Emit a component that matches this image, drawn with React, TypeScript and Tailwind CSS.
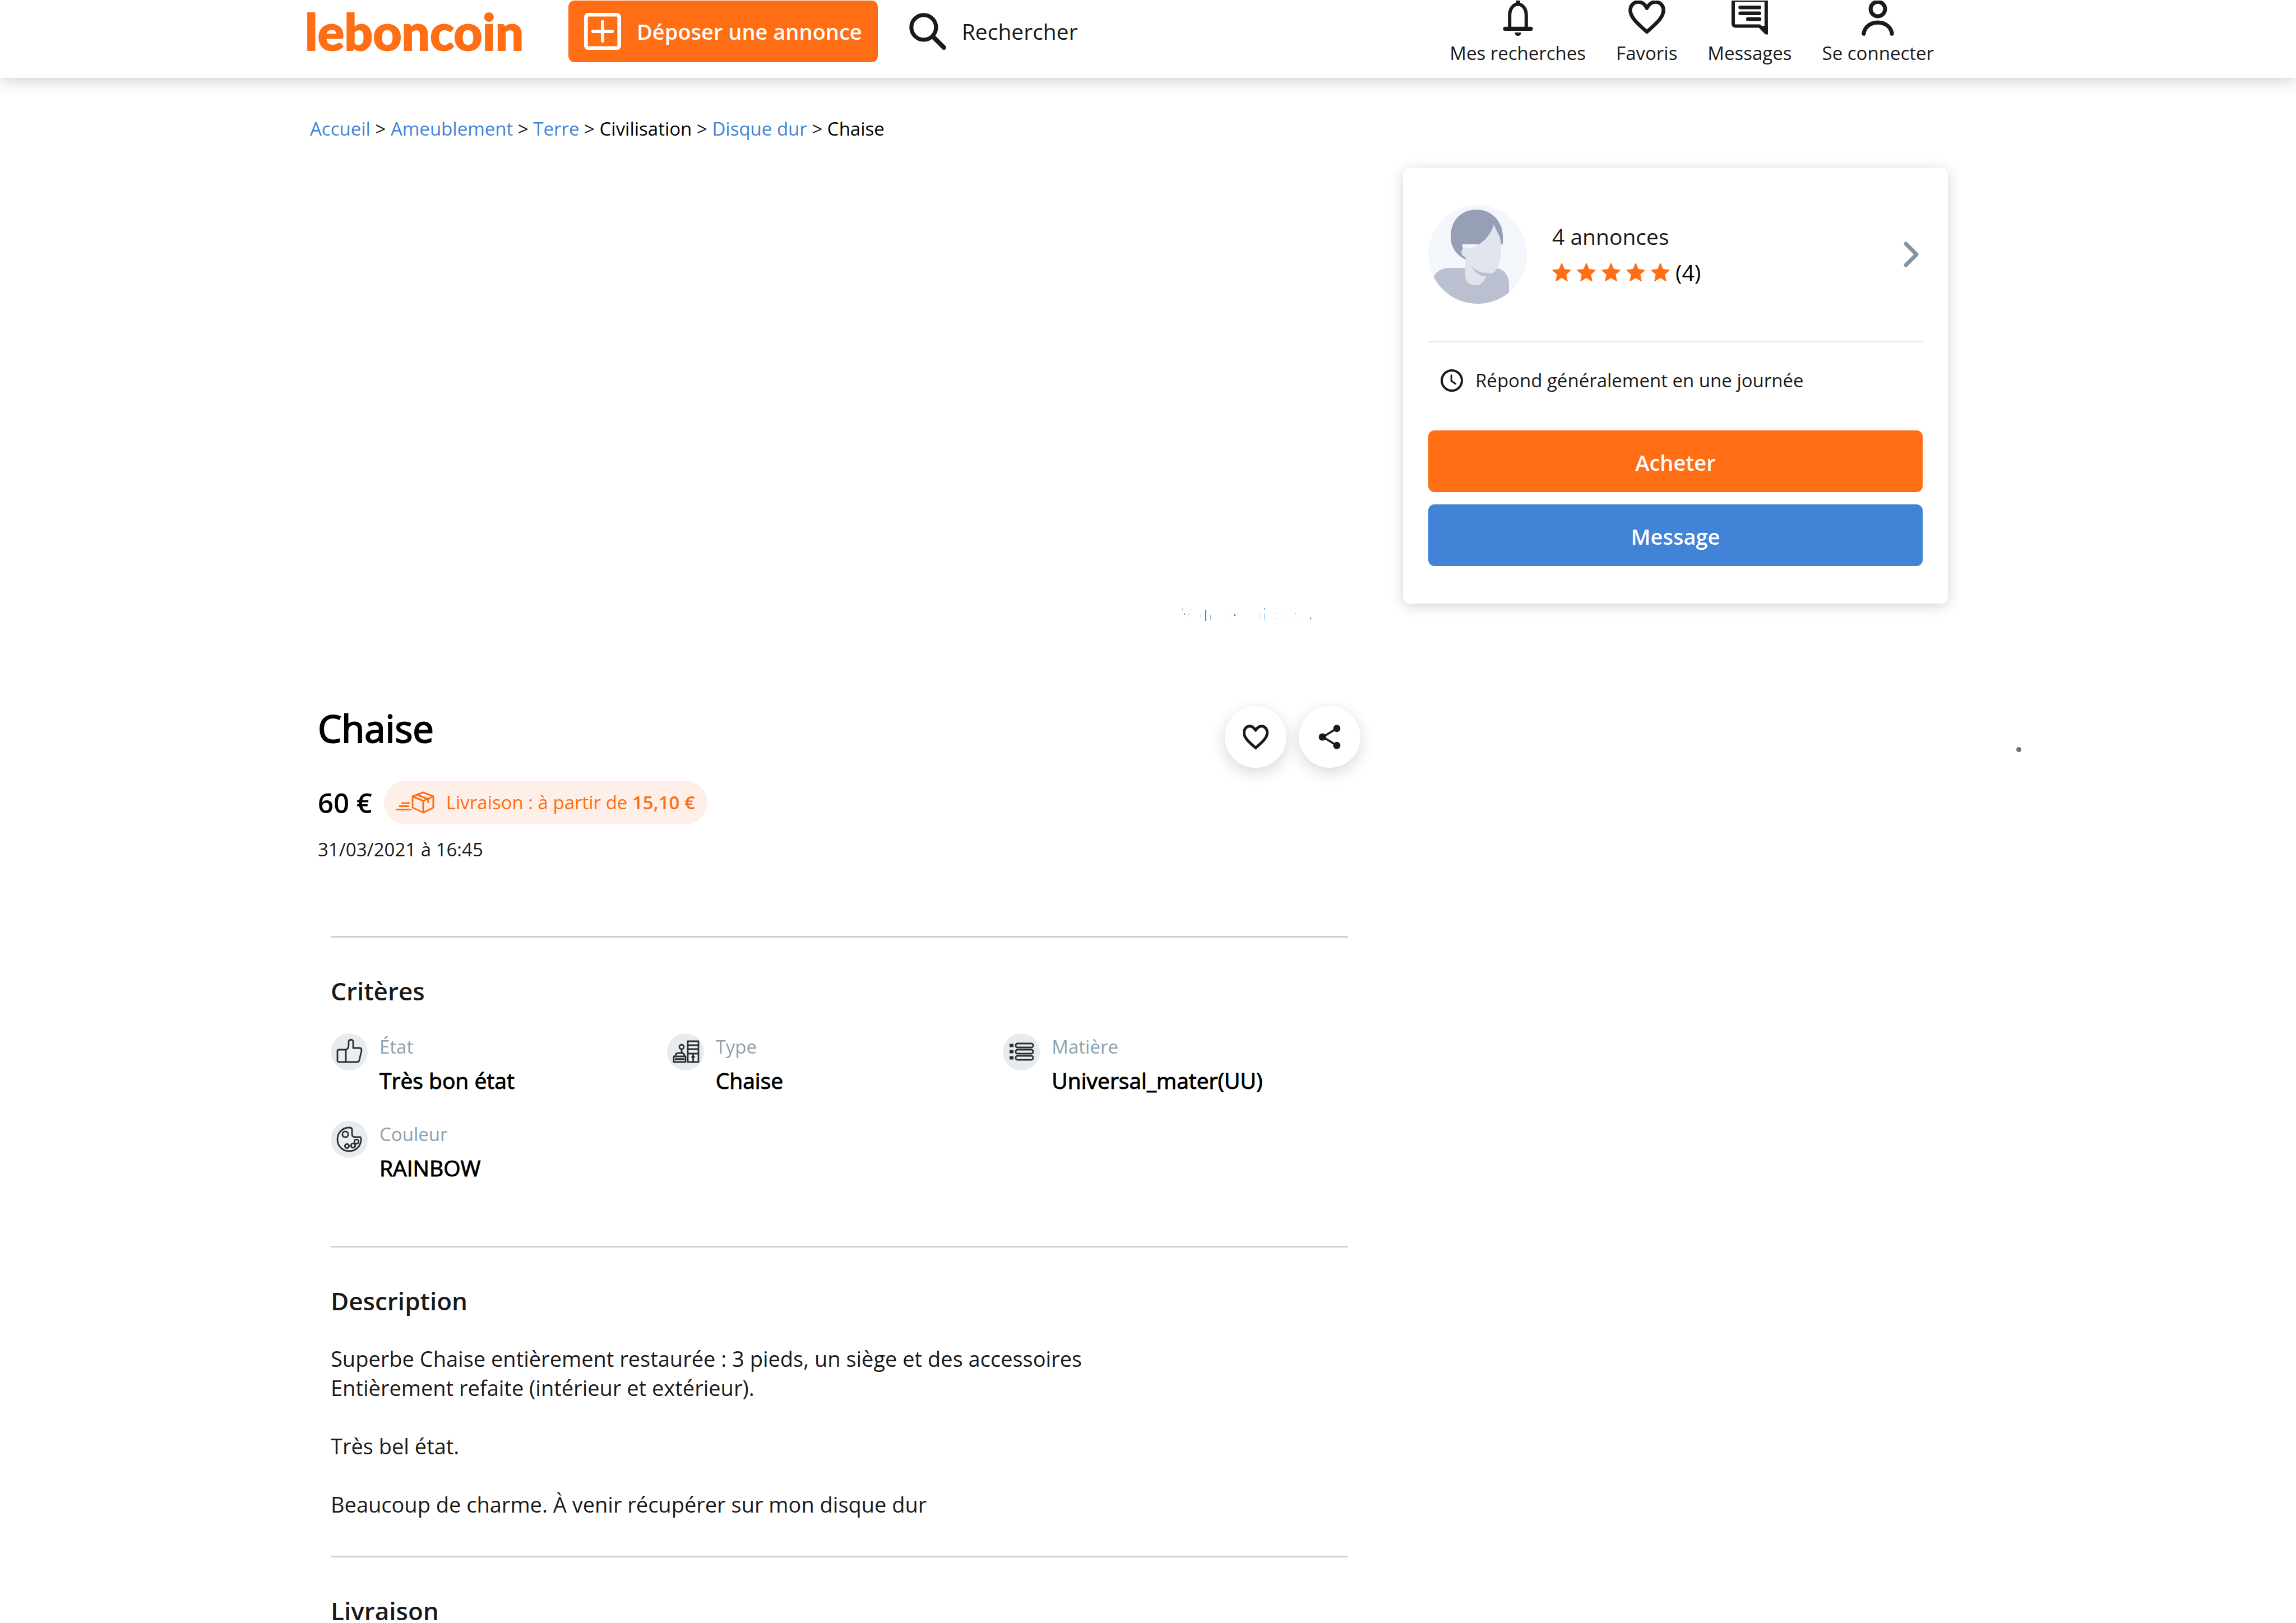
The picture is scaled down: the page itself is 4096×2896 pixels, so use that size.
import React from "react";

type IconProps = { className?: string };

function BellIcon({ className }: IconProps) {
  return (
    <svg viewBox="0 1 24 23" className={className} fill="none" stroke="currentColor" strokeWidth="2.200" aria-hidden="true">
      <path d="M6.600 19V10.600C6.600 6.600 8.800 3.400 12 3.400s5.400 3.200 5.400 7.200V19" />
      <path d="M3.600 19.400h16.800" strokeWidth="2.600" strokeLinecap="round" />
      <path d="M12 0v4" strokeWidth="2.800" />
      <path d="M10 21.800h4c0 1.400-.8 2.200-2 2.200s-2-.8-2-2.200z" fill="currentColor" stroke="none" />
    </svg>
  );
}

function HeartIcon({ className }: IconProps) {
  return (
    <svg viewBox="0 1 24 23" className={className} fill="none" stroke="currentColor" strokeWidth="2.400" strokeLinejoin="round" aria-hidden="true">
      <path d="M12 21.400C7 16.800 1.200 12.400 1.200 7.200c0-3 2.300-5.300 5.100-5.300 2.400 0 4.500 1.600 5.700 4.100 1.200-2.500 3.300-4.100 5.700-4.100 2.800 0 5.100 2.300 5.100 5.300 0 5.200-5.800 9.600-10.800 14.200z" />
    </svg>
  );
}

function ChatIcon({ className }: IconProps) {
  return (
    <svg viewBox="0 1 24 23" className={className} aria-hidden="true">
      <path d="M22.900 -1v23L18.500 17.600H2.800a1.400 1.400 0 0 1-1.400-1.400V-1" fill="none" stroke="currentColor" strokeWidth="2.200" strokeLinejoin="round" />
      <path d="M1 1.200h23" stroke="currentColor" strokeWidth="1.400" />
      <path d="M20 17.500h4v6z" fill="currentColor" />
      <path d="M6 5.500h12.500M6 9.300h12.500M11 13.100h7.500" stroke="currentColor" strokeWidth="2.400" strokeLinecap="round" />
    </svg>
  );
}

function UserIcon({ className }: IconProps) {
  return (
    <svg viewBox="0 1 24 23" className={className} fill="none" stroke="currentColor" strokeWidth="2.600" strokeLinecap="round" aria-hidden="true">
      <circle cx="12" cy="6.500" r="4.700" />
      <path d="M2.800 22.600c.6-4.500 4.500-7.300 9.200-7.300s8.600 2.800 9.200 7.300" />
    </svg>
  );
}

function PlusSquareIcon({ className }: IconProps) {
  return (
    <svg viewBox="0 0 24 24" className={className} fill="none" stroke="currentColor" aria-hidden="true">
      <rect x="1.200" y="1.200" width="21.600" height="21.600" rx="1.600" strokeWidth="2.400" />
      <path d="M12 5.800v12.400M5.800 12h12.400" strokeWidth="2.200" strokeLinecap="round" />
    </svg>
  );
}

function SearchIcon({ className }: IconProps) {
  return (
    <svg viewBox="0 0 24 24" className={className} fill="none" stroke="currentColor" aria-hidden="true">
      <circle cx="9.400" cy="9.400" r="8" strokeWidth="2.600" />
      <path d="M15.500 15.500l7 7" strokeWidth="3" strokeLinecap="round" />
    </svg>
  );
}

function Avatar({ className }: IconProps) {
  return (
    <svg viewBox="0 0 176 176" className={className} role="img" aria-label="Photo du vendeur">
      <defs>
        <clipPath id="avatar-disc">
          <circle cx="88" cy="88" r="88" />
        </clipPath>
      </defs>
      <g clipPath="url(#avatar-disc)">
        <rect width="176" height="176" fill="#f3f6fa" />
        <path d="M8 176V132c4-14 16-20 32-20h76c18 0 28 12 28 30v34z" fill="#bac0cf" />
        <path d="M66 92v36c0 9 8 15 18 15s18-7 20-20z" fill="#e1e4ec" />
        <path d="M40 56C40 28 58 8 86 8c26 0 47 20 47 48v14H60l8 28C48 88 40 74 40 56z" fill="#979fb7" />
        <path d="M74 78c22-8 36-22 43-43 6 14 13 22 13 38 0 22-4 36-10 44-4 6-12 6-20 4-14-3-28-10-34-26z" fill="#e1e4ec" />
        <circle cx="68" cy="84" r="9" fill="#e1e4ec" />
        <path d="M76 106c8 12 20 16 32 15-2 4-6 6-10 6-8-1-18-10-22-21z" fill="#bac0cf" />
      </g>
    </svg>
  );
}

function Star() {
  return (
    <svg viewBox="0 0 24 24" className="h-[34px] w-[34px]" aria-hidden="true">
      <path
        d="M12 .8l3.300 7.500 8 .8-6 5.500 1.800 8.200L12 18.500l-7.100 4.300 1.800-8.200-6-5.500 8-.8z"
        fill="#ff6e14"
        stroke="#ff6e14"
        strokeLinejoin="round"
      />
    </svg>
  );
}

function ClockIcon({ className }: IconProps) {
  return (
    <svg viewBox="0 0 24 24" className={className} fill="none" stroke="currentColor" strokeWidth="2.400" strokeLinecap="round" aria-hidden="true">
      <circle cx="12" cy="12" r="10.800" />
      <path d="M11.500 6.500v6l4.500 3" strokeWidth="1.800" />
    </svg>
  );
}

function DeliveryIcon({ className }: IconProps) {
  return (
    <svg viewBox="0 0 68 40" className={className} fill="none" stroke="currentColor" strokeWidth="3" strokeLinejoin="round" aria-hidden="true">
      <path d="M48 2l18 7v20L48 38 29 29V9z" />
      <path d="M29 9l19 8 18-8M48 17v21" />
      <path d="M37 6l20 8v7" />
      <path d="M9 21h15M5 26.500h18M0 32.500h27" />
    </svg>
  );
}

function ThumbIcon() {
  return (
    <svg viewBox="0 0 66 66" className="h-[66px] w-[66px]" fill="#e9eef2" stroke="#2b2f33" strokeWidth="2.800" strokeLinejoin="round" aria-hidden="true">
      <path d="M14 29h13v22H14c-1 0-2-1-2-2V31c0-1 1-2 2-2z" />
      <path d="M27 29c4-1 5-4 5-9v-5c0-5 8-5 8 0v11h11c3 0 4 2 4 4l-4 18c-1 2-2 3-4 3H27z" />
    </svg>
  );
}

function FurnitureIcon() {
  return (
    <svg viewBox="0 0 66 66" className="h-[66px] w-[66px]" fill="#eef1f4" stroke="#2b2f33" strokeWidth="2.800" strokeLinejoin="round" aria-hidden="true">
      <path d="M37 14h19v37H37z" />
      <path d="M37 21h19M37 28h19M37 36h19M46.500 36v15" />
      <path d="M43.500 42h6" strokeWidth="4" />
      <path d="M26 35v-6" />
      <circle cx="26" cy="24" r="4" />
      <path d="M15 41c0-4 2-6 5-6h6c3 0 5 2 5 6" />
      <path d="M12 41h21v10H12z" />
      <path d="M14 46h17" strokeWidth="3.600" />
    </svg>
  );
}

function ListIcon() {
  return (
    <svg viewBox="0 0 66 66" className="h-[66px] w-[66px]" stroke="#2b2f33" aria-hidden="true">
      <path d="M12 21.500h7M12 32.500h7M12 43.500h7" strokeWidth="6" />
      <g fill="#eef1f4" strokeWidth="2.800">
        <rect x="23" y="18" width="31" height="7" rx="3" />
        <rect x="23" y="29" width="31" height="7" rx="3" />
        <rect x="23" y="40" width="31" height="7" rx="3" />
      </g>
    </svg>
  );
}

function PaletteIcon() {
  return (
    <svg viewBox="0 0 66 66" className="h-[66px] w-[66px]" fill="#e9eef2" stroke="#2b2f33" strokeWidth="2.800" strokeLinejoin="round" aria-hidden="true">
      <path d="M33 12C21 12 12 21 12 33s9 21 21 21 21-9 21-21c0-2 0-4-2-4h-8c-4 0-6-2-6-5v-8c0-3-2-4-5-4z" />
      <circle cx="26" cy="24" r="5.200" />
      <circle cx="29" cy="45" r="3.600" />
      <circle cx="46" cy="37" r="3.800" />
      <circle cx="40" cy="44" r="3.800" />
    </svg>
  );
}

const NAV = [
  { label: "Mes recherches", Icon: BellIcon },
  { label: "Favoris", Icon: HeartIcon },
  { label: "Messages", Icon: ChatIcon },
  { label: "Se connecter", Icon: UserIcon },
];

const CRUMBS = [
  { label: "Accueil", link: true },
  { label: "Ameublement", link: true },
  { label: "Terre", link: true },
  { label: "Civilisation", link: false },
  { label: "Disque dur", link: true },
  { label: "Chaise", link: false },
];

const CRITERIA = [
  { label: "État", value: "Très bon état", Icon: ThumbIcon },
  { label: "Type", value: "Chaise", Icon: FurnitureIcon },
  { label: "Matière", value: "Universal_mater(UU)", Icon: ListIcon },
  { label: "Couleur", value: "RAINBOW", Icon: PaletteIcon },
];

/* Remains of the gallery caption: x, y, width, height, opacity */
const SPECKS = [
  [0, 1, 1, 3, 0.6], [3, 9, 2, 3, 0.5], [8, 20, 1, 2, 0.4], [11, 11, 2, 1, 0.4], [14, 2, 1, 2, 0.5],
  [33, 10, 1, 7, 0.9], [41, 3, 2, 20, 0.8], [50, 12, 1, 10, 0.4], [83, 8, 1, 2, 0.6], [83, 18, 1, 2, 0.4],
  [93, 11, 2, 3, 0.9], [138, 9, 1, 10, 0.3], [146, 0, 1, 3, 0.8], [146, 9, 1, 13, 0.4], [168, 9, 2, 1, 0.4],
  [168, 18, 2, 1, 0.3], [179, 18, 1, 2, 0.5], [187, 9, 1, 1, 0.4], [201, 9, 2, 1, 0.5], [201, 18, 1, 1, 0.3],
  [212, 18, 1, 1, 0.4], [228, 17, 2, 3, 0.9],
];

function SectionTitle({ children }: { children: React.ReactNode }) {
  return <h2 className="text-[44px] leading-[60px] font-semibold">{children}</h2>;
}

export default function App() {
  return (
    <div className="min-h-screen overflow-hidden bg-white font-['Open_Sans',sans-serif] text-[#1a1a1a]">
      <header className="flex h-[139px] items-start justify-between bg-white pt-px pr-[646px] pl-[544px] shadow-[0_3px_28px_rgba(0,0,0,0.22)]">
        <div className="flex items-center">
          <a
            href="#accueil"
            className="w-[470px] font-['Lato',sans-serif] text-[89px] leading-[110px] font-black text-[#ff6e14] [-webkit-text-stroke:2px_#ff6e14]"
          >
            leboncoin
          </a>
          <button className="flex h-[110px] items-center gap-7 rounded-[11px] bg-[#ff6e14] px-7 text-[38px] leading-[52px] font-semibold whitespace-nowrap text-white">
            <PlusSquareIcon className="h-[66px] w-[66px]" />
            Déposer une annonce
          </button>
          <a href="#recherche" className="ml-14 flex items-center gap-7 text-[39px] leading-[52px]">
            <SearchIcon className="h-[66px] w-[66px]" />
            Rechercher
          </a>
        </div>
        <nav aria-label="Compte" className="flex gap-[54px]">
          {NAV.map(({ label, Icon }) => (
            <a key={label} href="#compte" className="flex flex-col items-center gap-[9px] text-[33px] leading-[44px] whitespace-nowrap">
              <Icon className="h-[63px] w-[66px]" />
              {label}
            </a>
          ))}
        </nav>
      </header>

      <div className="pr-[621px] pl-[548px]">
        <nav aria-label="Fil d'Ariane" className="pt-[69px] pl-[5px] text-[33px] leading-[44px]">
          {CRUMBS.map(({ label, link }, i) => (
            <React.Fragment key={label}>
              {i > 0 && " > "}
              {link ? (
                <a href="#categorie" className="text-[#4183d7]">
                  {label}
                </a>
              ) : (
                <span className="text-black">{label}</span>
              )}
            </React.Fragment>
          ))}
        </nav>

        <div className="mt-[48px] flex items-start gap-[76px]">
          <main className="min-w-0 flex-1">
            <div className="flex h-[954px] items-end justify-end pr-[88px] pb-[146px]">
              <svg viewBox="0 0 230 23" className="h-[23px] w-[230px]" fill="#0a78c8" aria-hidden="true">
                {SPECKS.map(([x, y, w, h, o]) => (
                  <rect key={`${x}-${y}`} x={x} y={y} width={w} height={h} opacity={o} />
                ))}
              </svg>
            </div>

            <div className="flex justify-between">
              <div className="pl-[19px]">
                <h1 className="text-[67px] leading-[90px] text-black [-webkit-text-stroke:2px_black]">Chaise</h1>
                <div className="mt-[49px] flex items-center gap-[21px]">
                  <p className="text-[49px] leading-[68px] font-semibold text-black">60 €</p>
                  <p className="flex items-center gap-[21px] rounded-full bg-[#feefe8] py-[17px] pr-[22px] pl-[22px] text-[33px] leading-[44px] text-[#ff6e14]">
                    <DeliveryIcon className="h-[40px] w-[68px]" />
                    <span>
                      Livraison : à partir de <span className="font-semibold">15,10 €</span>
                    </span>
                  </p>
                </div>
                <p className="mt-[23px] text-[33px] leading-[44px]">31/03/2021 à 16:45</p>
              </div>
              <div className="flex gap-[22px] pt-[6px]">
                <button aria-label="Ajouter aux favoris" className="flex h-[110px] w-[110px] items-center justify-center rounded-full bg-white shadow-[0_8px_28px_rgba(0,0,0,0.16)]">
                  <svg viewBox="0 0 24 24" className="h-[46px] w-[46px]" fill="none" stroke="currentColor" strokeWidth="2.600" strokeLinejoin="round" aria-hidden="true">
                    <path d="M12 22.200c-4.500-4-10.800-8.800-10.800-14.200 0-3.400 2.300-6 5.300-6 2.300 0 4 1.500 5.500 3.800C13.500 3.500 15.200 2 17.500 2c3 0 5.300 2.600 5.300 6 0 5.400-6.300 10.200-10.800 14.200z" />
                  </svg>
                </button>
                <button aria-label="Partager" className="flex h-[110px] w-[110px] items-center justify-center rounded-full bg-white shadow-[0_8px_28px_rgba(0,0,0,0.16)]">
                  <svg viewBox="0 0 24 24" className="h-[44px] w-[44px]" fill="currentColor" aria-hidden="true">
                    <path d="M19 3.700L5.500 12 19 20.300" fill="none" stroke="currentColor" strokeWidth="2" />
                    <circle cx="19" cy="3.700" r="3.500" />
                    <circle cx="5" cy="12" r="3.600" />
                    <circle cx="19" cy="20.300" r="3.500" />
                  </svg>
                </button>
              </div>
            </div>

            <div className="mt-[132px] pr-[22px] pl-[42px]">
              <section className="border-t-3 border-[#cad1d9] pt-[65px]">
                <SectionTitle>Critères</SectionTitle>
                <dl className="mt-[46px] mr-4 grid grid-cols-3 gap-y-[46px]">
                  {CRITERIA.map(({ label, value, Icon }) => (
                    <div key={label} className="flex items-start gap-[21px]">
                      <span className="rounded-full bg-[#e6ebef]">
                        <Icon />
                      </span>
                      <div className="pt-0.5">
                        <dt className="text-[33px] leading-[44px] text-[#8c9fad]">{label}</dt>
                        <dd className="mt-3 text-[39px] leading-[52px] text-black [-webkit-text-stroke:1px_black]">{value}</dd>
                      </div>
                    </div>
                  ))}
                </dl>
              </section>

              <section className="mt-[113px] border-t-3 border-[#cad1d9] pt-[65px]">
                <SectionTitle>Description</SectionTitle>
                <p className="mt-[47px] text-[38px] leading-[52px] whitespace-pre-line">
                  {"Superbe Chaise entièrement restaurée : 3 pieds, un siège et des accessoires\nEntièrement refaite (intérieur et extérieur).\n\nTrès bel état.\n\nBeaucoup de charme. À venir récupérer sur mon disque dur"}
                </p>
              </section>

              <section className="mt-[66px] border-t-3 border-[#cad1d9] pt-[65px]">
                <SectionTitle>Livraison</SectionTitle>
              </section>
            </div>
          </main>

          <aside className="relative w-[972px] shrink-0">
            <div className="rounded-[11px] bg-white px-[45px] pt-[66px] pb-[67px] shadow-[0_4px_24px_rgba(0,0,0,0.18)]">
              <a href="#vendeur" className="flex items-center">
                <Avatar className="h-[176px] w-[176px]" />
                <div className="ml-[45px] flex-1">
                  <p className="text-[39px] leading-[52px]">4 annonces</p>
                  <p className="mt-3 flex items-center gap-[10px] text-[39px] leading-[52px] text-black">
                    <Star />
                    <Star />
                    <Star />
                    <Star />
                    <Star />
                    (4)
                  </p>
                </div>
                <svg viewBox="0 0 28 46" className="mr-1.5 h-[46px] w-[28px]" fill="none" stroke="#8094a5" strokeWidth="7" strokeLinecap="round" strokeLinejoin="round" aria-hidden="true">
                  <path d="M4 4l19 19L4 42" />
                </svg>
              </a>
              <p className="mt-[66px] flex items-center gap-[22px] border-t-3 border-[#e6ebef] pt-[46px] pl-[22px] text-[33px] leading-[44px]">
                <ClockIcon className="h-[40px] w-[40px]" />
                Répond généralement en une journée
              </p>
              <button className="mt-[67px] block h-[110px] w-full rounded-[11px] bg-[#ff6e14] pt-1 text-[38px] leading-[52px] font-semibold text-white">
                Acheter
              </button>
              <button className="mt-[22px] block h-[110px] w-full rounded-[11px] bg-[#4183d7] pt-1 text-[38px] leading-[52px] font-semibold text-white">
                Message
              </button>
            </div>
            <span className="absolute top-[1033px] -right-[131px] h-[9px] w-[9px] rounded-full bg-[#6b7280]" />
          </aside>
        </div>
      </div>
    </div>
  );
}
